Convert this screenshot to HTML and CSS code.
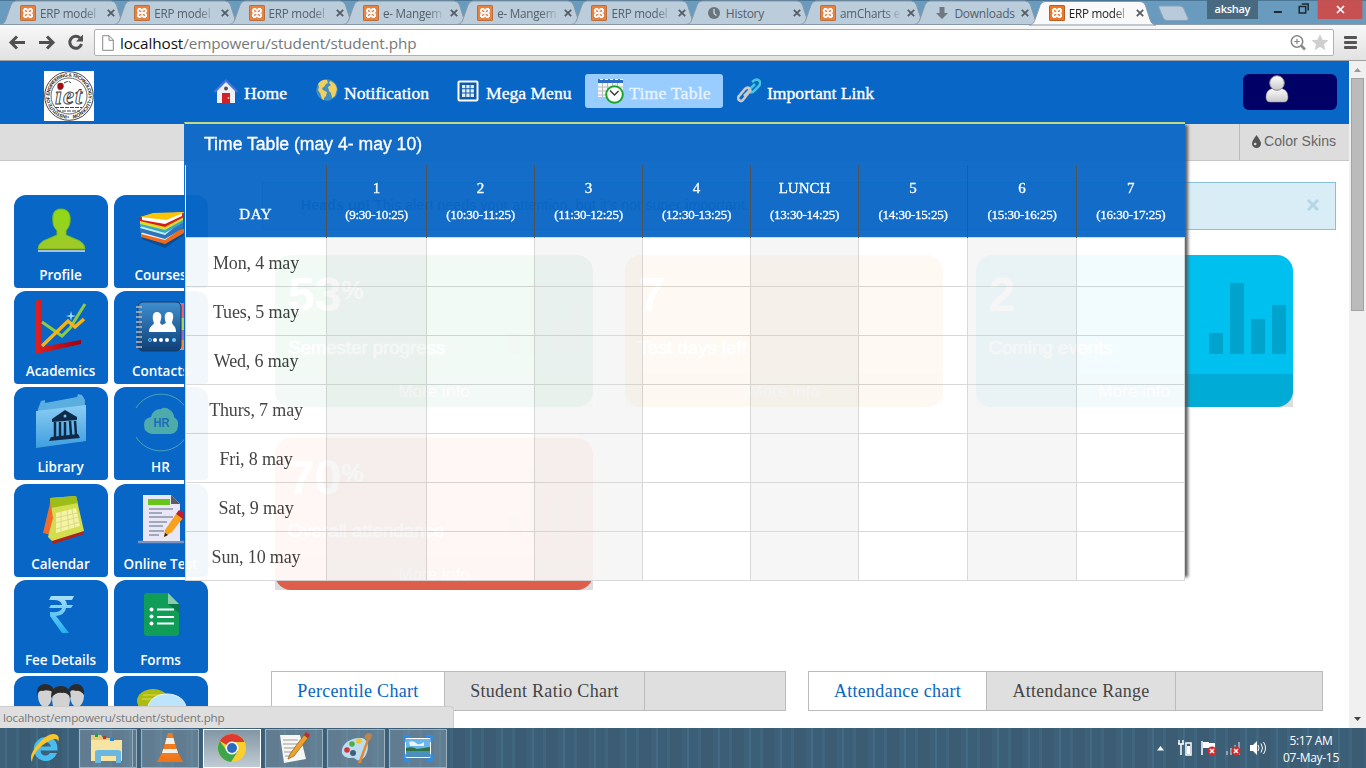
FILE: index.html
```html
<!DOCTYPE html>
<html lang="en">
<head>
<meta charset="utf-8">
<title>ERP model</title>
<link rel="stylesheet" href="styles.css">
</head>
<body>
<svg class="defs" width="0" height="0" aria-hidden="true">
  <defs>
    <linearGradient id="gGreen" x2="0" y2="1"><stop offset="0" stop-color="#8fd916"/><stop offset="1" stop-color="#a0c92a"/></linearGradient>
    <linearGradient id="gRed" x2="1" y2="0"><stop offset="0" stop-color="#e02020"/><stop offset="1" stop-color="#a00010"/></linearGradient>
    <linearGradient id="gBook" x2="0" y2="1"><stop offset="0" stop-color="#3f8fcf"/><stop offset="1" stop-color="#0f3f77"/></linearGradient>
    <linearGradient id="gFold" x2="0" y2="1"><stop offset="0" stop-color="#8ccdf3"/><stop offset="1" stop-color="#3d9fe0"/></linearGradient>
    <linearGradient id="gRup" x2="0" y2="1"><stop offset="0" stop-color="#a9e0fa"/><stop offset="1" stop-color="#22b0f0"/></linearGradient>
    <linearGradient id="gGrey" x2="0" y2="1"><stop offset="0" stop-color="#ffffff"/><stop offset="1" stop-color="#c8c8c8"/></linearGradient>
  </defs>
  <symbol id="tabshape" viewBox="0 0 128 25"><path d="M0 24.5C4 24 5 22 6 19L11 5Q12.500 1 16 1H111Q115 1 116.500 5L121 19Q122.500 24 127 24.500Z"/></symbol>
  <symbol id="xampp" viewBox="0 0 16 16"><rect width="16" height="16" rx="1.500" fill="#f37623"/><rect x=".5" y=".5" width="15" height="15" rx="1" fill="none" stroke="#b0602c"/><path d="M4 4h2.500L8 6l1.500-2H12M4 12h2.500L8 10l1.500 2H12M4 4v2.500L5.500 8 4 9.500V12M12 4v2.500L10.500 8 12 9.500V12M5.500 8h5" fill="none" stroke="#fff" stroke-width="2" stroke-linejoin="round"/></symbol>
  <symbol id="close" viewBox="0 0 8 8"><path d="M.8.8l6.400 6.400M7.200.8L.8 7.200" stroke="#555d64" stroke-width="1.800"/></symbol>
  <symbol id="bars" viewBox="0 0 77 71"><path d="M0 50h14v21H0zM21 0h14v71H21zM42 36h14v35H42zM63 22h14v49H63z"/></symbol>
</svg>

<div class="tabstrip">
  <div class="tab"><svg class="shape"><use href="#tabshape"/></svg><svg class="fav"><use href="#xampp"/></svg><span>ERP model</span><svg class="x"><use href="#close"/></svg></div>
  <div class="tab"><svg class="shape"><use href="#tabshape"/></svg><svg class="fav"><use href="#xampp"/></svg><span>ERP model</span><svg class="x"><use href="#close"/></svg></div>
  <div class="tab"><svg class="shape"><use href="#tabshape"/></svg><svg class="fav"><use href="#xampp"/></svg><span>ERP model</span><svg class="x"><use href="#close"/></svg></div>
  <div class="tab"><svg class="shape"><use href="#tabshape"/></svg><svg class="fav"><use href="#xampp"/></svg><span>e- Mangem</span><svg class="x"><use href="#close"/></svg></div>
  <div class="tab"><svg class="shape"><use href="#tabshape"/></svg><svg class="fav"><use href="#xampp"/></svg><span>e- Mangem</span><svg class="x"><use href="#close"/></svg></div>
  <div class="tab"><svg class="shape"><use href="#tabshape"/></svg><svg class="fav"><use href="#xampp"/></svg><span>ERP model</span><svg class="x"><use href="#close"/></svg></div>
  <div class="tab"><svg class="shape"><use href="#tabshape"/></svg><svg class="fav" viewBox="0 0 16 16"><circle cx="8" cy="8" r="6" fill="#5c656c"/><path d="M8 4v4.500l2.500 2" fill="none" stroke="#d5dde4" stroke-width="1.300"/></svg><span class="full">History</span><svg class="x"><use href="#close"/></svg></div>
  <div class="tab"><svg class="shape"><use href="#tabshape"/></svg><svg class="fav"><use href="#xampp"/></svg><span>amCharts e</span><svg class="x"><use href="#close"/></svg></div>
  <div class="tab"><svg class="shape"><use href="#tabshape"/></svg><svg class="fav" viewBox="0 0 16 16"><path d="M5.500 2h5v6H14l-6 6-6-6h3.500z" fill="#626a70"/></svg><span class="full">Downloads</span><svg class="x"><use href="#close"/></svg></div>
  <div class="tab active"><svg class="shape"><use href="#tabshape"/></svg><svg class="fav"><use href="#xampp"/></svg><span>ERP model</span><svg class="x"><use href="#close"/></svg></div>
  <svg class="newtab" viewBox="0 0 32 17"><path d="M1.500 1H22q3 0 4 3l4 9q1 2.500-2 2.500H9q-3 0-4-3L1 3Q.5 1 1.500 1z" fill="#b9cbda" stroke="#83a3ba"/></svg>
  <div class="winbtns">
    <div class="user">akshay</div>
    <svg width="110" height="19" viewBox="0 0 110 19"><path d="M16 11h8v2h-8z" fill="#1c2a33"/><path d="M41.500 6.500h6.500v6.500h-6.500zM44 4h6.500v6.500" fill="none" stroke="#1c2a33" stroke-width="1.500"/><rect x="60" width="45" height="19" fill="#c75050"/><path d="M79.500 6l7 7M86.500 6l-7 7" stroke="#fff" stroke-width="1.700"/></svg>
  </div>
</div>

<div class="toolbar">
  <svg width="92" height="34" viewBox="0 0 92 34"><g fill="none" stroke="#505050" stroke-width="3"><path d="M11 16.500h14M17 10.500l-6 6 6 6M39 16.500h14M47 10.500l6 6-6 6"/><path d="M80 12a6 6 0 1 0 1.500 6"/></g><path d="M83 8.500v7h-7z" fill="#505050"/></svg>
  <div class="omnibox">
    <svg width="12" height="16" viewBox="0 0 12 16"><path d="M.7.700h6.500L11.300 5v10.300H.7zM7 1v4.300h4" fill="#fff" stroke="#888"/></svg>
    <p><b>localhost</b>/empoweru/student/student.php</p>
    <svg width="42" height="22" viewBox="0 0 42 22"><circle cx="9" cy="9.500" r="5.700" fill="none" stroke="#888" stroke-width="1.600"/><path d="M6.300 9.500h5.400M9 6.800v5.400" stroke="#888" stroke-width="1.200"/><path d="M13 13.500l4 4" stroke="#888" stroke-width="2.500"/><path d="M32 2l2.500 5.700 6 .5-4.500 4.100 1.400 6L32 15.100l-5.400 3.200 1.400-6L23.500 8.200l6-.5z" fill="#cfcfcf"/></svg>
  </div>
  <div class="menu"><i></i><i></i><i></i></div>
</div>

<div class="viewport">
  <div class="page">
    <header>
      <svg class="logo" viewBox="0 0 50 50"><rect width="50" height="50" fill="#fff"/><circle cx="25" cy="25" r="24.300" fill="none" stroke="#444" stroke-width="1"/><circle cx="25" cy="25" r="18" fill="none" stroke="#444" stroke-width=".8"/><path id="ring" d="M25 44.500a19.500 19.500 0 1 1 .1 0" fill="none"/><text font-family="Liberation Sans" font-size="4.800" font-weight="700" fill="#222"><textPath href="#ring" textLength="119">• INSTITUTE OF ENGINEERING &amp; TECHNOLOGY • LUCKNOW</textPath></text><text x="11" y="33" font-family="Liberation Serif" font-size="25" font-style="italic" font-weight="700" fill="#fff" stroke="#444" stroke-width=".9" textLength="27">iet</text><circle cx="16.500" cy="15" r="3.200" fill="#a01010"/><path d="M20 12q5-3 7 0M11 36.500h27M13 40h23" fill="none" stroke="#444" stroke-dasharray="4 1"/></svg>
      <nav>
        <a><svg width="26" height="26" viewBox="0 0 26 26"><path d="M4 12l9-9 9 9v13H4z" fill="#eef0f4"/><path d="M1.500 14L13 2.500 24.500 14" fill="none" stroke="#4775d8" stroke-width="2.200"/><path d="M9 15h8v10H9z" fill="#d3212c"/><circle cx="15.500" cy="20" r=".9" fill="#f4d27a"/><circle cx="13" cy="10.500" r="2" fill="#555"/></svg>Home</a>
        <a><svg width="24" height="26" viewBox="0 0 24 26"><circle cx="12" cy="12" r="10.700" fill="#3d8fc4"/><path d="M3 6q4-5 9-4l1 3-2 1-2 3-2 1 1 2 4 2-1 4-2 2v2l-2-1-2-6-2-3 1-3zM15 3q6 2 7 8l-2 7-3 2-1-5-2-2-1-4 3-2-2-2z" fill="#f2cf5e"/></svg>Notification</a>
        <a><svg width="22" height="24" viewBox="0 0 22 24"><rect x="1.500" y="2.500" width="19" height="19" rx="1" fill="#1159a9" stroke="#fff" stroke-width="2"/><path d="M5 6h3.300v3.300H5zM9.300 6h3.300v3.300H9.300zM13.600 6h3.300v3.300h-3.300zM5 10.300h3.300v3.300H5zM9.300 10.300h3.300v3.300H9.300zM13.600 10.300h3.300v3.300h-3.300zM5 14.600h3.300v3.300H5zM9.300 14.600h3.300v3.300H9.300zM13.600 14.600h3.300v3.300h-3.300z" fill="#dcefff"/></svg>Mega Menu</a>
        <a class="on"><svg width="28" height="28" viewBox="0 0 28 28"><path d="M1 2h25v18H1z" fill="#f6f6f6"/><path d="M1 3h25v3H1z" fill="#2b6cc4"/><path d="M1 2.500h25" stroke="#777" stroke-dasharray="2 3"/><path d="M1 10h25M1 14h25M1 18h25M5.500 6v14M10.500 6v14M15.500 6v14M20.500 6v14" stroke="#b7bcc2"/><circle cx="17.500" cy="17.500" r="8.300" fill="#fff" stroke="#1ba32a" stroke-width="2"/><path d="M13 13.500l4.500 4.500 4-4" fill="none" stroke="#333" stroke-width="1.300"/></svg>Time Table</a>
        <a><svg width="24" height="26" viewBox="0 0 24 26"><g fill="none" stroke-width="2.600"><path d="M15 4l3-2q3-1 4.500 1t-.5 5l-5 5q-2 2-4 1l-1-2 6-6" stroke="#43c5dd"/><path d="M14 12l-5 6-3 4q-2 2-4 0t0-4l6-7q2-2 4-1l1 2-6 6" stroke="#c9c9c9"/></g></svg>Important Link</a>
      </nav>
      <div class="account"><svg width="24" height="28" viewBox="0 0 24 28"><path d="M1 22q0-9 11-9t11 9q0 5-4 5H5q-4 0-4-5z" fill="url(#gGrey)" stroke="#999" stroke-width=".5"/><circle cx="12" cy="8" r="7.300" fill="url(#gGrey)" stroke="#888"/></svg></div>
    </header>
    <div class="subbar"><div class="skins"><svg width="9" height="13" viewBox="0 0 9 13"><path d="M4.500 0Q9 6 9 8.500a4.500 4.500 0 0 1-9 0Q0 6 4.500 0z" fill="#555"/><circle cx="3.200" cy="9" r="1.300" fill="#ddd"/></svg>Color Skins</div></div>

    <div class="body">
      <aside>
        <a class="tile"><svg viewBox="0 0 94 66"><path d="M47 14c7 0 10 5 9 13-.5 5-3 7-4 9v4l14 6q5 3 5 8H24q0-5 5-8l14-6v-4c-1-2-4-4-4-9-1-8 1-13 8-13z" fill="url(#gGreen)" stroke="#73bb16"/><path d="M24 56h47" stroke="#a9bfd8" stroke-width="2"/></svg>Profile</a>
        <a class="tile"><svg viewBox="0 0 94 66"><path d="M28 41l42-5v4L51 53 28 44z" fill="#0c4d94"/><path d="M27 39l43-5v4L51 49 27 42z" fill="#f06a19"/><path d="M28 37l41-5-18 13-24-6z" fill="#eee"/><path d="M26 33l43-4v4L51 44 26 37z" fill="#2d73be"/><path d="M27 31l41-5-17 14-25-7z" fill="#bff1ef"/><path d="M26 28l43-4v4L51 38 26 31z" fill="#3aa6c8"/><path d="M26 26l43-5v4L51 35 26 29z" fill="#dedb2b"/><path d="M26 23l42-5 2 4-19 10-25-6z" fill="#d71e16"/><path d="M28 22l40-5v4L51 29 28 25z" fill="#fff"/><path d="M26 22l13-4 33-1-20 8z" fill="#ffc400"/></svg>Courses</a>
        <a class="tile"><svg viewBox="0 0 94 66"><path d="M22 10l5-2v48l40-7v4L22 63z" fill="url(#gRed)"/><path d="M28 31l20 14 8-8 15-24" fill="none" stroke="#8dcb43" stroke-width="3"/><path d="M28 55l26-25 7 6 9-8" fill="none" stroke="#f7b313" stroke-width="3.500"/><path d="M57 20l1 4 4 1-4 1-1 4-1-4-4-1 4-1z" fill="#9edcff"/></svg>Academics</a>
        <a class="tile"><svg viewBox="0 0 94 66"><path d="M64 12h6v15h-6z" fill="#f65c78"/><path d="M64 27h6v12h-6z" fill="#b4d24a"/><path d="M64 39h6v10h-6z" fill="#a06aba"/><path d="M64 49h6v10h-6z" fill="#fb8b42"/><rect x="24" y="11" width="43" height="49" rx="5" fill="url(#gBook)" stroke="#123a66"/><path d="M22 16h6M22 21h6M22 26h6M22 31h6M22 36h6M22 41h6M22 46h6M22 51h6M22 56h6" stroke="#bbb" stroke-width="1.500"/><path d="M43 21c4 0 5 4 4 7l-1 4 2 2 4-2c-2-5-2-11 3-11s5 5 3 10c0 4 4 3 4 10H35c0-6 4-6 5-9-2-5-2-11 3-11z" fill="#fff"/><g fill="#fff"><circle cx="41" cy="49" r="2"/><circle cx="47" cy="49" r="2"/><circle cx="53" cy="49" r="2"/></g><circle cx="60" cy="49" r="2" fill="#6cc9f2"/><circle cx="36" cy="49" r="1.500" fill="none" stroke="#6cc9f2"/></svg>Contacts</a>
        <a class="tile"><svg viewBox="0 0 94 66"><path d="M24 22l3-8 4-1v3l32-6 1-3 4 1 3 5-1 41-45 4z" fill="#5aaee0"/><path d="M22 24l50-6v36l-50 7z" fill="url(#gFold)"/><path d="M38 32l13-9 12 7v3l-25 2z" fill="#0e2a49"/><path d="M41 35v15M46 35v15M51 35v14M56 34l1 14M61 34l1 14" stroke="#0e2a49" stroke-width="2.500"/><path d="M37 50l27-3 2 4-31 3z" fill="#0e2a49"/><circle cx="51" cy="29" r="1.500" fill="#7ac4ee"/></svg>Library</a>
        <a class="tile"><svg viewBox="0 0 94 66"><path d="M22 21a29.500 29.500 0 0 1 50 0M22 50a29.500 29.500 0 0 0 50 0" fill="none" stroke="#4aa3b5"/><path d="M38 47q-8-1-8-9 0-7 7-8 2-8 10-8 4-3 9 1 4 3 4 7 5 3 4 9-1 8-8 8z" fill="#4dabac"/><text x="47.500" y="40" text-anchor="middle" font-family="Liberation Sans" font-weight="700" font-size="13" fill="#1c6cb6" textLength="16" lengthAdjust="spacingAndGlyphs">HR</text></svg>HR</a>
        <a class="tile"><svg viewBox="0 0 94 66"><path d="M29 49l8-34 8 3-4 34z" fill="#f06c2c"/><path d="M37 56l33-9v3L39 60z" fill="#b41f1f"/><path d="M36 14l26-2 8 35-32 10-4-4 5-19z" fill="#d3de4e"/><path d="M36 14l26-2 2 7-27 5z" fill="#9dbe19"/><path d="M42 29l20-5 4 18-24 7z" fill="#f5f3a5"/><path d="M41 34l22-5M41 39l24-6M42 45l24-7M47 27v20M53 26l2 20M58 25l3 19" stroke="#d9dc86"/></svg>Calendar</a>
        <a class="tile"><svg viewBox="0 0 94 66"><path d="M24 58h50" stroke="#7c94bd" stroke-width="2.500"/><path d="M29 11h28l9 9v37H29z" fill="#e9e6f6"/><path d="M57 11l9 9h-9z" fill="#5a5a68"/><path d="M34 15h22v6H34z" fill="#69c51c"/><path d="M35 25h24M35 29h13M35 33h24M35 38h18M35 42h14M35 47h15M35 51h10" stroke="#8b93a9" stroke-width="1.500"/><path d="M51 46l11-16 7 4-11 14-8 5z" fill="#f6a21f"/><path d="M62 30l3-4 7 4-3 5z" fill="#c11b2d"/><path d="M50 53l1-4 3 2z" fill="#222"/></svg>Online Test</a>
        <a class="tile"><svg viewBox="0 0 94 66"><path d="M37 16h23l-2 4h-7q2 2 2 5h6l-2 3h-5q-1 7-10 8l13 17h-7L36 36v-4q11 1 12-4H35l2-3h11q-1-5-8-5h-5z" fill="url(#gRup)"/></svg>Fee Details</a>
        <a class="tile"><svg viewBox="0 0 94 66"><path d="M33 13h21l11 11v29q0 3-3 3H33q-3 0-3-3V16q0-3 3-3z" fill="#0f9d58"/><path d="M54 13l11 11H54z" fill="#87ceac"/><path d="M54 24h11v9z" fill="#0b7a4b"/><path d="M43 29.500h17M43 37h17M43 43.500h17" stroke="#fff" stroke-width="2"/><g fill="#fff"><circle cx="37.500" cy="29.500" r="2"/><circle cx="37.500" cy="36.500" r="2"/><circle cx="37.500" cy="43.500" r="2"/></g></svg>Forms</a>
        <a class="tile"><svg viewBox="0 0 94 66"><g fill="#d2d2d2"><ellipse cx="31" cy="20" rx="7" ry="11"/><ellipse cx="63" cy="20" rx="7" ry="11"/><ellipse cx="47" cy="24" rx="9" ry="12"/></g><path d="M23 19q-1-11 9-11 8 1 8 8-8-3-11-1-4-1-6 4zM54 16q1-8 9-8 8 1 7 11-4-5-8-4-4-2-8 1zM37 22q0-12 10-12 9 0 10 12-4-6-9-5-6-1-11 5z" fill="#2b2b2b"/></svg></a>
        <a class="tile"><svg viewBox="0 0 94 66"><ellipse cx="39" cy="25" rx="16" ry="12" fill="#aebb13"/><path d="M29 19h20M28 23h15" stroke="#d6dc4c"/><ellipse cx="53" cy="32" rx="19" ry="14" fill="#bce4fa" stroke="#e7f6fe"/></svg></a>
      </aside>
      <main>
        <div class="alert"><p><b>Heads up!</b> This alert needs your attention, but it's not super important.</p><svg width="12" height="12" viewBox="0 0 12 12"><path d="M1 1l10 10M11 1L1 11" stroke="#b5d6e6" stroke-width="3"/></svg></div>
        <div class="cards">
          <div class="wrap"><div class="card green"><h3>53<sup>%</sup></h3><p>Semester progress</p><svg><use href="#bars"/></svg><footer>More info</footer></div></div>
          <div class="wrap"><div class="card amber"><h3>7</h3><p>Test days left</p><footer>More info</footer></div></div>
          <div class="wrap"><div class="card aqua"><h3>2</h3><p>Coming events</p><svg><use href="#bars"/></svg><footer>More info</footer></div></div>
          <div class="wrap"><div class="card red"><h3>70<sup>%</sup></h3><p>Overall attendance</p><svg><use href="#bars"/></svg><footer>More info</footer></div></div>
        </div>
        <div class="charts">
          <div class="ctabs"><a class="sel p1">Percentile Chart</a><a class="p2">Student Ratio Chart</a></div>
          <div class="ctabs"><a class="sel p1">Attendance chart</a><a class="p3">Attendance Range</a></div>
        </div>
      </main>
    </div>

    <section class="dropdown">
      <h2>Time Table (may 4- may 10)</h2>
      <table>
        <colgroup><col class="c0"><col class="c1"><col class="c2"><col class="c2"><col class="c2"><col class="c2"><col class="c3"><col class="c3"><col class="c2"></colgroup>
        <thead><tr><th><br>DAY</th><th>1<br><small>(9:30-10:25)</small></th><th>2<br><small>(10:30-11:25)</small></th><th>3<br><small>(11:30-12:25)</small></th><th>4<br><small>(12:30-13:25)</small></th><th>LUNCH<br><small>(13:30-14:25)</small></th><th>5<br><small>(14:30-15:25)</small></th><th>6<br><small>(15:30-16:25)</small></th><th>7<br><small>(16:30-17:25)</small></th></tr></thead>
        <tbody>
          <tr><td>Mon, 4 may</td><td></td><td></td><td></td><td></td><td></td><td></td><td></td><td></td></tr>
          <tr><td>Tues, 5 may</td><td></td><td></td><td></td><td></td><td></td><td></td><td></td><td></td></tr>
          <tr><td>Wed, 6 may</td><td></td><td></td><td></td><td></td><td></td><td></td><td></td><td></td></tr>
          <tr><td>Thurs, 7 may</td><td></td><td></td><td></td><td></td><td></td><td></td><td></td><td></td></tr>
          <tr><td>Fri, 8 may</td><td></td><td></td><td></td><td></td><td></td><td></td><td></td><td></td></tr>
          <tr><td>Sat, 9 may</td><td></td><td></td><td></td><td></td><td></td><td></td><td></td><td></td></tr>
          <tr><td>Sun, 10 may</td><td></td><td></td><td></td><td></td><td></td><td></td><td></td><td></td></tr>
        </tbody>
      </table>
    </section>
    <div class="status">localhost/empoweru/student/student.php</div>
  </div>
  <div class="scroll"><svg width="17" height="16" viewBox="0 0 17 16"><path d="M5 11l3.500-4 3.500 4z" fill="#999"/></svg><div class="thumb"></div><svg width="17" height="17" viewBox="0 0 17 17"><path d="M5 6h7l-3.500 4z" fill="#444"/></svg></div>
</div>

<div class="taskbar">
  <div class="tb plain"><svg width="34" height="34" viewBox="0 0 34 34"><path d="M17.500 6a12 12 0 1 0 11.500 16h-7q-1.500 2.500-4.500 2.500-4.500 0-5-5h17Q30 6 17.500 6zm-5 9.500q1-4.500 5-4.500t5.500 4.500z" fill="#49bdf0"/><path d="M4 31q-4-7 7-19T29 4q3 2 1 7 0-5-7-2-9 4-15 12-4 6-4 10z" fill="#f8c52b"/></svg></div>
  <div class="tb stack"><svg width="34" height="32" viewBox="0 0 34 32"><path d="M2 3h10l2 3h9l1 3h8v19H2z" fill="#e9ca74"/><path d="M2 8h31v21H2z" fill="#f7e4a2"/><path d="M6 2h3v3H6z" fill="#20a43a"/><path d="M14 4h3v3h-3z" fill="#d62c1f"/><path d="M21 6h4v3h-4z" fill="#2485d6"/><path d="M6 31V20q0-2 3-2h20q3 0 3 2v11h-5v-7H12v7z" fill="#6ab8e0"/></svg></div>
  <div class="tb"><svg width="28" height="32" viewBox="0 0 28 32"><path d="M5 22h18l4 8H1z" fill="#f07418"/><path d="M12 1h4l7 23q-9 4-18 0z" fill="#f07c1f"/><path d="M10.500 6h7l1.500 6H9zM7.300 17h13.400l1.300 4H6z" fill="#f1efeb"/></svg></div>
  <div class="tb cur"><svg width="30" height="30" viewBox="0 0 30 30"><circle cx="15" cy="15" r="14" fill="#f9cf2c"/><path d="M15 15L2.800 8A14 14 0 0 1 27.500 9H15z" fill="#dd3b2f"/><path d="M2.800 8A14 14 0 0 0 14 29l7-11H10z" fill="#3da64b"/><circle cx="15" cy="15" r="6.500" fill="#fff"/><circle cx="15" cy="15" r="5" fill="#2c6cc0"/></svg></div>
  <div class="tb"><svg width="32" height="32" viewBox="0 0 32 32"><path d="M2 3h20l6 24-22 4z" fill="#f6f6f4"/><path d="M5 8h15M5 12h15M6 16h12M6 20h8M7 24h7" stroke="#9a9a9a"/><path d="M12 22L26 3l4 3-14 18-6 3z" fill="#eda22d" stroke="#8b5a14" stroke-width=".7"/><path d="M26 3l2-3 4 3-2 3z" fill="#b92f2f"/></svg></div>
  <div class="tb"><svg width="32" height="32" viewBox="0 0 32 32"><path d="M2 21C1 10 13 5 22 6c9 2 7 18-1 22-5 2-5-3-10-2-5 0-8-2-9-5z" fill="#bddcf0"/><circle cx="7" cy="18" r="2.800" fill="#d1343b"/><circle cx="12" cy="12" r="2.800" fill="#52ad44"/><circle cx="19" cy="9" r="2.800" fill="#f1c62c"/><circle cx="13" cy="21" r="3" fill="#3e607a"/><path d="M18 31L27 7l2 1-8 23z" fill="#e28a2d"/><path d="M25 7q-2-4 3-6l4 1q0 5-3 7z" fill="#b98553"/></svg></div>
  <div class="tb"><svg width="30" height="28" viewBox="0 0 30 28"><path d="M2 4h26v20H2z" fill="#fff"/><path d="M3 5h24v10H3z" fill="#69b6ef"/><path d="M6 8q4-2 7 1t8-1v4H7z" fill="#e8f5fd"/><path d="M3 14q6-2 11 1l13-2v4H3z" fill="#317245"/><path d="M3 17h24v6H3z" fill="#4b90bd"/><path d="M1.500 8V2h6M22.500 2h6v6M1.500 20v6h6M28.500 20v6h-6" fill="none" stroke="#2c8ee8" stroke-width="2.500"/></svg></div>
  <svg class="tray" width="112" height="24" viewBox="0 0 112 24"><path d="M1 14.500h7L4.500 10z" fill="#fff"/><g fill="none" stroke="#fff" stroke-width="1.500"><path d="M22 8h6M23 4v4M27 4v4M25 8v11M30 7h5v12h-5z"/></g><path d="M31 10h3v8h-3z" fill="#fff"/><path d="M46 5v14" stroke="#fff" stroke-width="1.500"/><path d="M47 6h6v1h6v6h-6v-1h-6z" fill="#fff"/><circle cx="56" cy="15" r="4.500" fill="#d92727"/><path d="M54 13l4 4m0-4l-4 4" stroke="#fff" stroke-width="1.500"/><path d="M70 15h2v4h-2zM74 12h2v7h-2zM78 9h2v10h-2zM82 6h2v13h-2z" fill="#93a4b0"/><circle cx="80" cy="15" r="4.500" fill="#d92727"/><path d="M78 13l4 4m0-4l-4 4" stroke="#fff" stroke-width="1.500"/><path d="M94 9h3l4-4v14l-4-4h-3z" fill="#fff"/><path d="M102 9q2 3 0 6M105 7.500q3 4.500 0 9M107.500 6q4 6 0 12" fill="none" stroke="#fff"/></svg>
  <div class="clock">5:17 AM<br>07-May-15</div>
</div>
</body>
</html>
```
FILE: styles.css
```css
* { box-sizing: border-box; }
body { margin: 0; width: 1366px; height: 768px; overflow: hidden; display: flex; flex-direction: column; font-family: "Liberation Serif", serif; background: #fff; }
h2, h3, p { margin: 0; font-weight: normal; }
.defs { position: absolute; }

/* browser frame */
.tabstrip { height: 25px; flex: none; display: flex; background: #689bbd; border-top: 1px solid #4a7796; padding-left: 6px; font: 12px "Open Sans", sans-serif; letter-spacing: -.15px; color: #55606a; border-bottom: 1px solid #8d9ca8; }
.tab { position: relative; width: 114.3px; flex: none; height: 24px; display: flex; align-items: center; padding-left: 14px; }
.tab .shape { position: absolute; left: -6px; top: -1px; width: 128px; height: 25px; fill: #bbccda; stroke: #8798a8; stroke-width: 1; }
.tab .fav { position: relative; width: 16px; height: 16px; flex: none; opacity: .85; }
.tab span { position: relative; width: 62px; margin-left: 4px; font-size: 11.7px; letter-spacing: -.25px; white-space: nowrap; -webkit-mask-image: linear-gradient(90deg, #000 72%, transparent 100%); }
.tab .full { -webkit-mask-image: none; font-size: 12px; letter-spacing: -.25px; }
.tab .x { position: absolute; left: 101px; top: 8px; width: 8px; height: 8px; }
.tab.active { z-index: 2; color: #222; }
.tab.active .shape { fill: #f9f9f9; height: 26px; }
.tab.active .fav { opacity: 1; }
.newtab { width: 32px; height: 17px; flex: none; margin: 4px 0 0 9px; }
.winbtns { margin-left: 17px; display: flex; width: 160px; flex: none; margin-top: -1px; }
.user { width: 51px; height: 19px; background: #48697f; color: #fff; text-align: center; font: 600 11px/18px "Open Sans", sans-serif; letter-spacing: -.3px; }
.toolbar { height: 36px; flex: none; display: flex; align-items: center; background: linear-gradient(#f8f8f8, #e2e2e2); border-bottom: 1px solid #a0a0a0; }
.omnibox { width: 1240px; margin-left: 2px; height: 27px; display: flex; align-items: center; border: 1px solid #b0b0b0; border-radius: 2px; background: #fff; padding-left: 7px; padding-right: 3px; }
.omnibox p { flex: 1; margin-left: 6px; font: 15.3px "Open Sans", sans-serif; letter-spacing: -.1px; color: #777; }
.omnibox b { font-weight: normal; color: #111; }
.menu { width: 13px; margin-left: 10px; display: grid; gap: 2px; }
.menu i { height: 3px; background: #555; border-radius: 1px; }

.viewport { flex: 1; display: flex; min-height: 0; }
.page { position: relative; width: 1349px; height: 667px; overflow: hidden; background: #fff; }
.scroll { width: 17px; background: #f0f0f0; display: flex; flex-direction: column; align-items: center; }
.thumb { width: 13px; height: 233px; background: #bbb; border: 1px solid #a3a3a3; margin: 1px 0 auto; }

/* site header */
header { height: 63px; display: flex; background: #0866c6; position: relative; }
.logo { width: 50px; height: 50px; margin: 10px 0 0 44px; flex: none; }
nav { display: flex; padding: 13px 0 0 111px; }
nav a { height: 34px; display: flex; align-items: center; padding: 4px 0 0 10px; font-size: 17.6px; color: #fff; -webkit-text-stroke: .35px #fff; white-space: nowrap; border-radius: 3px; }
nav a svg { margin: -4px 5px 0 0; flex: none; }
nav a:nth-child(1) { width: 102px; padding-left: 8px; }
nav a:nth-child(2) { width: 141px; padding-left: 8px; }
nav a:nth-child(3) { width: 137px; padding-left: 9px; }
nav a:nth-child(3) svg { margin-right: 7px; }
nav a.on { background: #99ccff; width: 138px; padding-left: 12px; color: #e8f4ff; -webkit-text-stroke-color: #e8f4ff; letter-spacing: .25px; }
nav a.on svg { margin-right: 4px; }
nav a:last-child { padding-left: 14px; }
nav a:last-child svg { margin-right: 6px; }
.account { width: 94px; height: 36px; border-radius: 6px; background: #000066; margin: 13px 12px 0 auto; padding: 1px 0 0 22px; }
.subbar { height: 37px; background: #ddd; border-bottom: 1px solid #c6c6c6; display: flex; justify-content: flex-end; }
.skins { width: 110px; border-left: 1px solid #bbb; padding-left: 12px; display: flex; align-items: center; font: 14.1px "Liberation Sans", sans-serif; color: #666; padding-bottom: 2px; }
.skins svg { margin-right: 3px; }

.body { display: flex; padding-left: 14px; }
aside { width: 194px; margin-top: 34px; display: grid; grid-template-columns: 94px 94px; gap: 3.2px 6px; align-content: start; height: 533px; }
.tile { height: 93px; background: #0866c6; border-radius: 12px 12px 4px 4px; color: #fff; text-align: center; font: 600 13.5px/28px "Open Sans", sans-serif; white-space: nowrap; padding-right: 1px; }
.tile svg { display: block; width: 94px; height: 66px; }
main { margin-left: 54px; flex: 1; padding-top: 21px; }
.alert { width: 1074px; height: 48px; border: 1px solid #87c1de; background: #d9edf7; display: flex; align-items: center; padding: 0 16px 2px 38px; font: 14px "Liberation Sans", sans-serif; color: #0d5f86; justify-content: space-between; }
.alert p { letter-spacing: .17px; }
.cards { margin: 25px 0 0 13px; display: grid; grid-template-columns: 318px 318px 317px; gap: 31px 32.3px; }
.wrap { height: 152px; background: linear-gradient(#fff 130px, #ddd 130px); }
.card { height: 152px; border-radius: 16px; overflow: hidden; position: relative; padding: 12px 13px; color: #fff; font-family: "Liberation Sans", sans-serif; }
.card h3 { font: bold 48px/55px "Liberation Sans", sans-serif; height: 70px; }
.card sup { font-size: 25px; vertical-align: 12px; line-height: 0; }
.card p { font-size: 18.6px; line-height: 22px; -webkit-text-stroke: .6px #fff; }
.card svg { position: absolute; left: 233px; top: 28px; width: 77px; height: 71px; fill: rgba(0,0,0,.15); }
.card footer { position: absolute; left: 0; right: 0; bottom: 0; height: 33px; line-height: 34px; font-size: 17.2px; text-align: center; background: rgba(0,0,0,.1); color: rgba(255,235,235,.8); }
.green { background: #00a65a; } .amber { background: #f39c12; } .aqua { background: #00c0ef; } .red { background: #f56954; }
.charts { display: flex; gap: 22px; margin: 81px 0 0 9px; }
.ctabs { width: 515px; height: 40px; border: 1px solid #bbb; background: #dfdfdf; display: flex; font-size: 18px; letter-spacing: .3px; line-height: 38px; color: #444; }
.ctabs a { border-right: 1px solid #bbb; text-align: center; }
.ctabs .sel { background: #fff; color: #0866c6; }
.p1 { width: 173px; } .ctabs + .ctabs .p1 { width: 178px; } .p2 { width: 200px; } .p3 { width: 189px; }

/* timetable menu lies over the page */
.dropdown { position: absolute; left: 184px; top: 61px; width: 1001px; height: 452px; opacity: .95; background: #0866c6; border-top: 2px solid #cde07a; border-left: 1px solid #0866c6; box-shadow: 3px 3px 3px #555; }
.dropdown h2 { height: 41px; padding-left: 19px; font: 17.6px/41px "Liberation Sans", sans-serif; color: #fff; -webkit-text-stroke: .35px #fff; }
table { border-collapse: collapse; table-layout: fixed; width: 1000px; background: #fff; }
.c0 { width: 141px; } .c1 { width: 100px; } .c2 { width: 108px; } .c3 { width: 109px; }
thead { background: #0866c6; }
th { height: 72px; padding: 10px 0 0; font-size: 15px; line-height: 26px; font-weight: normal; color: #fff; border-right: 1px solid #4a4a4a; vertical-align: top; -webkit-text-stroke: .3px #fff; }
th:first-child { letter-spacing: .6px; }
th:last-child { border-right: 0; }
th small { font-size: 13px; letter-spacing: -.25px; line-height: 20px; }
td { height: 49px; padding: 3px 0 0; text-align: center; font-size: 18px; letter-spacing: -.15px; color: #3a3a3a; border: 1px solid #d8d8d8; }
td:nth-child(even) { background: #f6f6f6; }
.status { position: absolute; left: 0; bottom: 0; width: 454px; height: 22px; background: #dfdfdf; border: 1px solid #ccc; border-width: 1px 1px 0 0; border-radius: 0 4px 0 0; padding-left: 3px; font: 11.6px/22px "Open Sans", sans-serif; letter-spacing: -.16px; color: #777; }

/* taskbar */
.taskbar { height: 40px; flex: none; display: flex; align-items: center; gap: 4px; padding-left: 14px; background: repeating-linear-gradient(90deg, #3d6179 0 5px, #436b86 5px 7px, #3b5f77 7px 16px, #40667f 16px 19px, #3b5c73 19px 31px), #3c6079; }
.tb { width: 58px; height: 39px; display: flex; align-items: center; justify-content: center; border: 1px solid #9db0bd; background: rgba(150,170,185,.42); }
.tb.plain { border: 0; background: none; width: 61px; }
.tb.stack { box-shadow: inset -4px 0 0 -1px #5c7a8e, inset -5px 0 0 -1px #9db0bd; padding-right: 4px; }
.tb.cur { background: linear-gradient(#8296a4, #c0ccd4); border-color: #fff; }
.tray { margin-left: auto; }
.clock { width: 62px; margin: 0 24px 0 8px; text-align: center; color: #fff; font: 12px/17px "Open Sans", sans-serif; letter-spacing: -.3px; white-space: nowrap; padding-top: 2px; }
```
